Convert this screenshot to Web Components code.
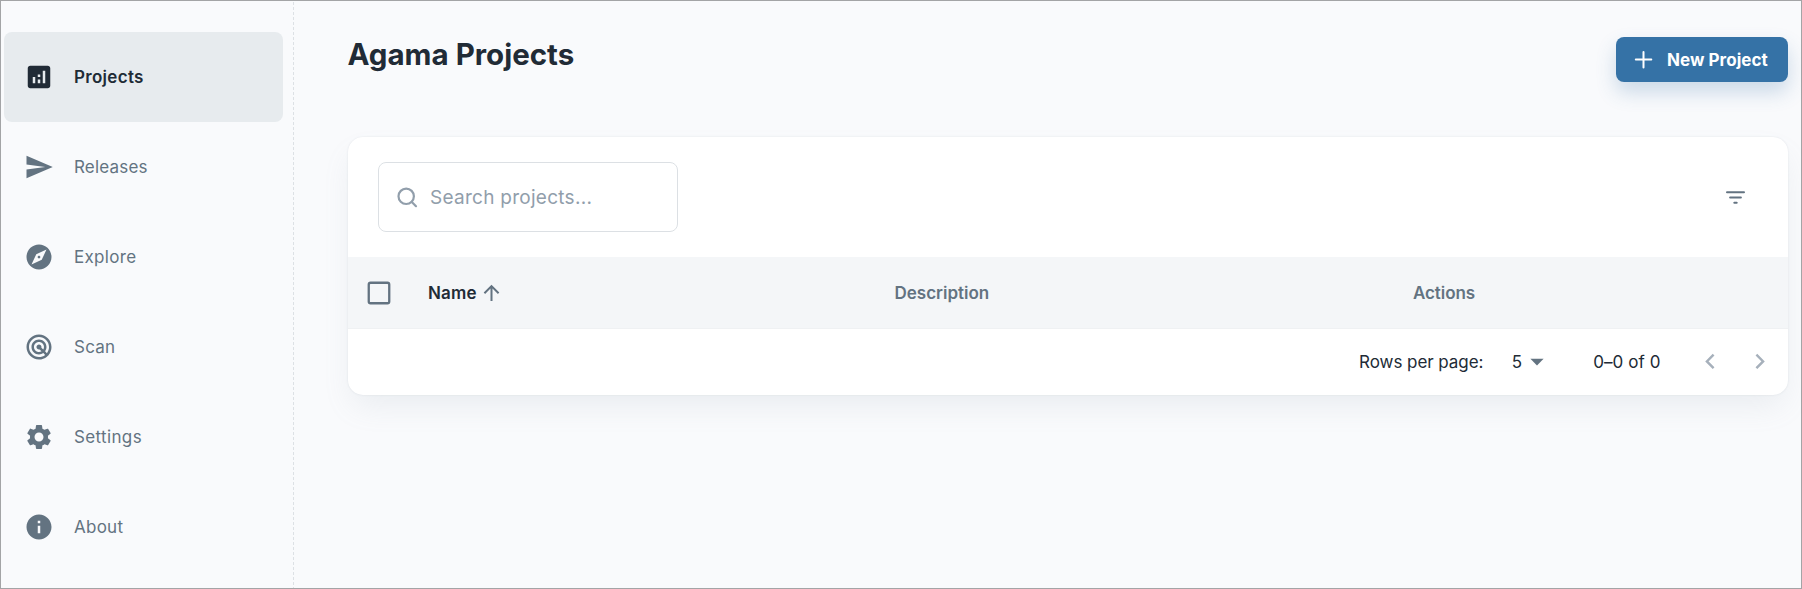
<!DOCTYPE html>
<html lang="en">
<head>
<meta charset="utf-8">
<title>Agama Projects</title>
<style>
html,body{margin:0;height:100%}
body{font-family:Inter,"Liberation Sans",sans-serif;font-size:17px;color:#212b36;overflow:hidden}
</style>
</head>
<body>
<agama-app></agama-app>

<template id="t-app">
<style>
:host{display:flex;box-sizing:border-box;height:100vh;border:1px solid #a3a4a6;background:#f9fafc}
main{flex:1;padding:31px 13px 0 54px;min-width:0}
header{display:flex;justify-content:space-between;align-items:center;height:55px;margin-bottom:50px}
h1{margin:0 0 10px -.5px;font-size:29.5px;font-weight:700;line-height:45px;letter-spacing:0;color:#212b36}
</style>
<side-nav>
<nav-item icon="projects" active style="--ls:.3px">Projects</nav-item>
<nav-item icon="send" style="--ls:.18px">Releases</nav-item>
<nav-item icon="explore" style="--ls:.3px">Explore</nav-item>
<nav-item icon="radar" style="--ls:.22px">Scan</nav-item>
<nav-item icon="settings" style="--ls:.36px">Settings</nav-item>
<nav-item icon="info" style="--ls:.25px">About</nav-item>
</side-nav>
<main>
<header><h1>Agama Projects</h1><action-button>New Project</action-button></header>
<project-table></project-table>
</main>
</template>

<template id="t-nav">
<style>
:host{display:flex;flex-direction:column;box-sizing:border-box;width:293px;padding:31px 11px 0 3px;
background:repeating-linear-gradient(to bottom,#dde1e5 0 3px,transparent 3px 5px) right 1px/1px 100% no-repeat}
</style><slot></slot>
</template>

<template id="t-item">
<style>
:host{display:flex;align-items:center;box-sizing:border-box;height:90px;flex:none;padding-left:20px;border-radius:8px;color:#637381;gap:20px;letter-spacing:var(--ls,0)}
:host([active]){background:#e7ebee;color:#212b36;font-weight:600}
svg{display:block;width:30px;height:30px;fill:currentColor}
</style><svg viewBox="0 0 24 24"><path/></svg><span><slot></slot></span>
</template>

<template id="t-button">
<style>
:host{display:flex;align-items:center;box-sizing:border-box;width:172px;height:45px;padding-left:15px;gap:11px;border-radius:8px;background:#3572a6;color:#fff;font-weight:700;letter-spacing:.05px;white-space:nowrap;box-shadow:0 10px 20px 0 rgba(53,114,166,.24)}
svg{width:25px;height:25px;stroke:#fff;stroke-width:2;stroke-linecap:round}
</style>
<svg viewBox="0 0 25 25"><path d="M12.5 5v15.5M4.8 12.5h15.5"/></svg><span><slot></slot></span>
</template>

<template id="t-table">
<style>
:host{display:block;background:#fff;border-radius:15px;overflow:hidden;box-shadow:0 0 2px 0 rgba(145,158,171,.24),0 15px 30px -5px rgba(145,158,171,.14)}
svg{display:block;flex:none;fill:none}
.tools{display:flex;align-items:center;justify-content:space-between;height:120px;padding:0 40px 0 30px}
.search{display:flex;align-items:center;box-sizing:border-box;width:300px;height:70px;padding-left:16px;border:1px solid #dce0e4;border-radius:8px;color:#919eab;font-size:19px;letter-spacing:.27px}
.search svg{margin-right:10px}
.head{display:grid;grid-template-columns:80px 466.5px 518.5px 1fr;align-items:center;box-sizing:border-box;height:72px;background:#f4f6f8;border-bottom:1px solid #eff1f3;color:#637381;font-weight:600}
.head svg{margin-left:18px}
.name{display:flex;align-items:center;color:#212b36;letter-spacing:.17px}
.name svg{margin-left:2.5px}
.foot{display:flex;align-items:center;justify-content:flex-end;height:66px}
.foot>*{white-space:nowrap}
</style>
<div class="tools">
<div class="search"><svg width="25" height="25" viewBox="0 0 25 25" stroke="#919eab" stroke-width="2.2" stroke-linecap="round"><circle cx="11.2" cy="11.3" r="7.7"/><path d="M16.8 17l4.2 4.2"/></svg><span>Search projects...</span></div>
<svg width="25" height="25" viewBox="0 0 25 25" stroke="#637381" stroke-width="2" stroke-linecap="round"><path d="M4 7.3h17M7.1 12.5h10.8M11.3 17.7h2.4"/></svg>
</div>
<div class="head">
<svg width="26" height="26" viewBox="0 0 26 26" stroke="#637381" stroke-width="2.3"><rect x="2.75" y="2.75" width="20.5" height="20.5" rx="1.8"/></svg>
<span class="name">Name<svg width="24" height="24" viewBox="0 0 24 24" stroke="#637381" stroke-width="2" stroke-linejoin="miter"><path d="M12.5 20V5M5.4 12.2l7.1-7.1 7.1 7.1"/></svg></span>
<span>Description</span><span style="letter-spacing:-.08px">Actions</span>
</div>
<div class="foot">
<span style="letter-spacing:-.06px;margin-right:28.5px">Rows per page:</span><span>5</span>
<svg width="14" height="8" viewBox="0 0 14 8" style="margin:0 49px 0 8px"><path d="M.4.8h13.2L7 7.5z" fill="#637381"/></svg>
<span style="letter-spacing:.07px;margin-right:44.5px">0–0 of 0</span>
<svg width="10" height="16" viewBox="0 0 10 16" stroke="#a6b0bb" stroke-width="2.4" style="margin:0 40px 2px 0"><path d="M8.6 1.6L1.9 8.4l6.7 6.8"/></svg>
<svg width="10" height="16" viewBox="0 0 10 16" stroke="#a6b0bb" stroke-width="2.4" style="margin:0 23px 2px 0"><path d="M1.4 1.6L8.1 8.4l-6.7 6.8"/></svg>
</div>
</template>

<script>
const ICONS={
projects:'M19 3H5c-1.1 0-2 .9-2 2v14c0 1.1.9 2 2 2h14c1.1 0 2-.9 2-2V5c0-1.1-.9-2-2-2zM9 17H7v-5h2v5zm4 0h-2v-3h2v3zm0-5h-2v-2h2v2zm4 5h-2V7h2v10z',
send:'M2.01 21L23 12 2.01 3 2 10l15 2-15 2z',
explore:'M12 10.9c-.61 0-1.1.49-1.1 1.1s.49 1.1 1.1 1.1c.61 0 1.1-.49 1.1-1.1s-.49-1.1-1.1-1.1zM12 2C6.48 2 2 6.48 2 12s4.48 10 10 10 10-4.48 10-10S17.52 2 12 2zm2.19 12.19L6 18l3.81-8.19L18 6l-3.81 8.19z',
radar:'M19.74 18.33C21.15 16.6 22 14.4 22 12c0-5.52-4.48-10-10-10S2 6.48 2 12s4.48 10 10 10c2.4 0 4.6-.85 6.33-2.26.27-.22.53-.46.78-.71.03-.03.05-.06.07-.08.2-.2.39-.41.56-.62zM12 20c-4.41 0-8-3.59-8-8s3.59-8 8-8 8 3.59 8 8c0 1.85-.63 3.54-1.69 4.9l-1.43-1.43c.69-.98 1.1-2.17 1.1-3.46 0-3.31-2.69-6-6-6s-6 2.69-6 6 2.69 6 6 6c1.3 0 2.51-.42 3.49-1.13l1.42 1.42C15.54 19.37 13.85 20 12 20zm1.92-7.49c.17-.66.02-1.38-.49-1.9l-.02-.02c-.77-.77-2-.78-2.78-.04-.01.01-.03.02-.05.04-.78.78-.78 2.05 0 2.83l.02.02c.52.51 1.25.67 1.91.49l1.51 1.51c-.6.36-1.29.58-2.04.58-2.21 0-4-1.79-4-4s1.79-4 4-4 4 1.79 4 4c0 .73-.21 1.41-.56 2l-1.5-1.51z',
settings:'M19.14 12.94c.04-.3.06-.61.06-.94 0-.32-.02-.64-.07-.94l2.03-1.58c.18-.14.23-.41.12-.61l-1.92-3.32c-.12-.22-.37-.29-.59-.22l-2.39.96c-.5-.38-1.03-.7-1.62-.94L14.4 2.81c-.04-.24-.24-.41-.48-.41h-3.84c-.24 0-.43.17-.47.41l-.36 2.54c-.59.24-1.13.57-1.62.94l-2.39-.96c-.22-.08-.47 0-.59.22L2.74 8.87c-.12.21-.08.47.12.61l2.03 1.58c-.05.3-.09.63-.09.94s.02.64.07.94l-2.03 1.58c-.18.14-.23.41-.12.61l1.92 3.32c.12.22.37.29.59.22l2.39-.96c.5.38 1.03.7 1.62.94l.36 2.54c.05.24.24.41.48.41h3.84c.24 0 .44-.17.47-.41l.36-2.54c.59-.24 1.13-.56 1.62-.94l2.39.96c.22.08.47 0 .59-.22l1.92-3.32c.12-.22.07-.47-.12-.61l-2.01-1.58zM12 15.6c-1.98 0-3.6-1.62-3.6-3.6s1.62-3.6 3.6-3.6 3.6 1.62 3.6 3.6-1.62 3.6-3.6 3.6z',
info:'M12 2C6.48 2 2 6.48 2 12s4.48 10 10 10 10-4.48 10-10S17.52 2 12 2zm1 15h-2v-6h2v6zm0-8h-2V7h2v2z'
};
const define=(name,tpl,ready)=>customElements.define(name,class extends HTMLElement{
  constructor(){super();this.attachShadow({mode:'open'}).append(document.getElementById(tpl).content.cloneNode(true));}
  connectedCallback(){if(ready)ready(this);}
});
define('side-nav','t-nav');
define('nav-item','t-item',el=>el.shadowRoot.querySelector('path').setAttribute('d',ICONS[el.getAttribute('icon')]));
define('action-button','t-button');
define('project-table','t-table');
define('agama-app','t-app');
</script>
</body>
</html>
